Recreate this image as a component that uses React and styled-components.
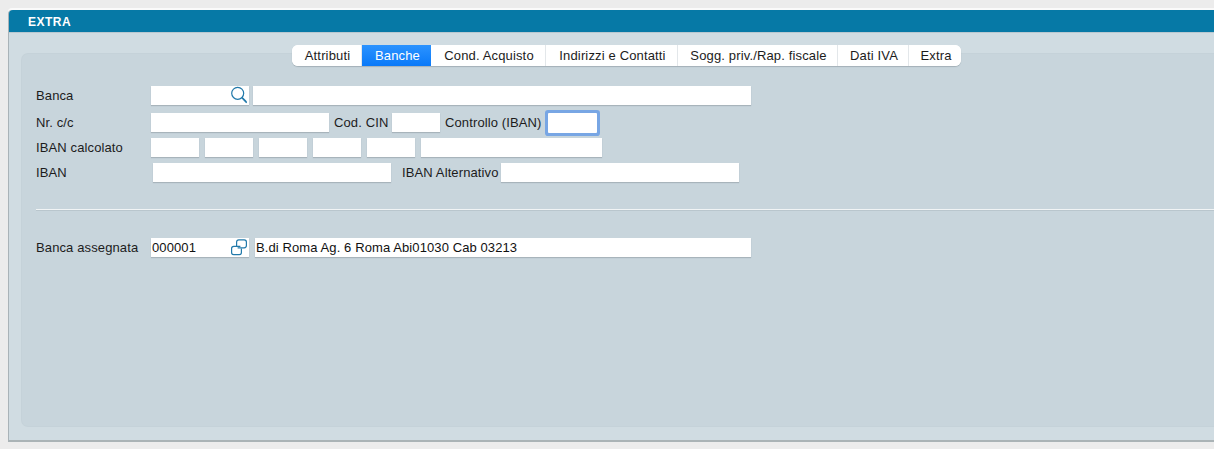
import React from 'react';
import styled, { createGlobalStyle } from 'styled-components';

const GlobalStyle = createGlobalStyle`
  html, body {
    margin: 0;
    padding: 0;
    height: 449px;
    overflow: hidden;
    background: #ececec;
    font-family: 'Liberation Sans', Arial, sans-serif;
    font-size: 13px;
    color: #1c1c1c;
  }
`;

const Page = styled.div`
  padding: 10px 0 0 8px;
  height: 449px;
  box-sizing: border-box;
  border-top: 1px solid #e2e2e2;
  margin-top: -1px;
`;

const Window = styled.div`
  width: 1230px;
  height: 432px;
  box-sizing: border-box;
  display: flex;
  flex-direction: column;
  background: #d0dce2;
  border-radius: 4px 0 0 0;
  border-left: 1px solid #a9b3b8;
  border-bottom: 2px solid #aab3b6;
  box-shadow: 0 -2px 0 #fafafa;
`;

const TitleBar = styled.div`
  height: 23px;
  flex: none;
  display: flex;
  align-items: center;
  padding: 1px 0 0 19px;
  box-sizing: border-box;
  background: #0679a6;
  border-radius: 4px 0 0 0;
  color: #fff;
  font-size: 12px;
  font-weight: 700;
  letter-spacing: 0.5px;
  border-bottom: 1px solid #b9c8d0;
`;

const Tabs = styled.div`
  display: flex;
  align-self: flex-start;
  height: 21px;
  margin: 12px 0 0 283px;
  position: relative;
  z-index: 1;
  background: #fff;
  border-radius: 6px;
  box-shadow: 0 1px 1px #a3b0b7;
  overflow: hidden;
`;

const Tab = styled.div`
  display: flex;
  align-items: center;
  justify-content: center;
  width: ${p => p.$w}px;
  padding-left: 2px;
  letter-spacing: 0.15px;
  color: ${p => (p.$active ? '#fff' : '#1c1c1c')};
  background: ${p => (p.$active ? 'linear-gradient(#2b93ff, #0a79f8)' : '#fff')};
  border-right: ${p => (p.$last || p.$active ? 'none' : '1px solid #e3e7ea')};
  box-sizing: border-box;
`;

const Inner = styled.div`
  flex: 1;
  margin: -12px 0 14px 13px;
  padding: 32px 0 0 14px;
  background: #c8d5dc;
  border-radius: 6px 0 0 6px;
  box-shadow: 0 0 0 1px #c5d2d9;
`;

const Row = styled.div`
  display: flex;
  align-items: center;
  height: 19px;
  margin-top: ${p => p.$top || 0}px;
`;

const RowLabel = styled.div`
  width: ${p => p.$w || 115}px;
  flex: none;
  margin-top: -1px;
  white-space: nowrap;
  letter-spacing: 0.12px;
`;

const InlineLabel = styled.div`
  margin-left: ${p => p.$ml}px;
  margin-top: -1px;
  white-space: nowrap;
  width: ${p => p.$w}px;
  flex: none;
  letter-spacing: 0.12px;
`;

const Field = styled.div`
  width: ${p => p.$w}px;
  height: 19px;
  flex: none;
  margin-left: ${p => p.$ml || 0}px;
  position: relative;
  display: flex;
  align-items: center;
  padding-left: 1px;
  box-sizing: border-box;
  background: #fff;
  box-shadow: 0 1px 1px #a8b4bb;
  font-size: 13px;
  color: #111;
  letter-spacing: 0.1px;
`;

const FocusField = styled(Field)`
  height: 20px;
  margin-top: 1px;
  box-shadow: 0 0 0 3px #78a6e4;
  border-radius: 1px;
`;

const FieldIcon = styled.svg`
  position: absolute;
  right: 2px;
  top: 0;
  width: 18px;
  height: 18px;
  fill: none;
  stroke: #2179aa;
  stroke-width: 1.2;
`;

const Rule = styled.div`
  height: 1px;
  margin: 27px 0 28px;
  background: #f1f4f5;
  box-shadow: 0 1px 0 #b9c6cd;
`;

const SearchIcon = () => (
  <FieldIcon viewBox="0 0 18 18">
    <circle cx="8.7" cy="7.3" r="6" />
    <path d="M13 11.6 L17.8 16.6" strokeWidth="1.7" />
  </FieldIcon>
);

const LinkIcon = () => (
  <FieldIcon viewBox="0 0 18 18">
    <path d="M7.6 8 V4 Q7.6 1.8 9.8 1.8 H15.2 Q17.4 1.8 17.4 4 V7.6 Q17.4 9.8 15.2 9.8 H8.6" />
    <path d="M12.4 10.6 V14.4 Q12.4 16.6 10.2 16.6 H4.8 Q2.6 16.6 2.6 14.4 V10.6 Q2.6 8.4 4.8 8.4 H11.4" />
  </FieldIcon>
);

const tabs = [
  ['Attributi', 70],
  ['Banche', 69],
  ['Cond. Acquisto', 115],
  ['Indirizzi e Contatti', 132],
  ['Sogg. priv./Rap. fiscale', 160],
  ['Dati IVA', 71],
  ['Extra', 52]
];

const App = () => (
  <Page>
    <GlobalStyle />
    <Window>
      <TitleBar>EXTRA</TitleBar>
      <Tabs>
        {tabs.map(([name, w], i) => (
          <Tab key={name} $w={w} $active={name === 'Banche'} $last={i === tabs.length - 1}>
            {name}
          </Tab>
        ))}
      </Tabs>
      <Inner>
        <Row>
          <RowLabel>Banca</RowLabel>
          <Field $w={98}><SearchIcon /></Field>
          <Field $w={498} $ml={4} />
        </Row>
        <Row $top={8}>
          <RowLabel>Nr. c/c</RowLabel>
          <Field $w={178} />
          <InlineLabel $ml={5} $w={58}>Cod. CIN</InlineLabel>
          <Field $w={48} />
          <InlineLabel $ml={5} $w={103}>Controllo (IBAN)</InlineLabel>
          <FocusField $w={49} />
        </Row>
        <Row $top={6}>
          <RowLabel>IBAN calcolato</RowLabel>
          <Field $w={48} />
          <Field $w={48} $ml={6} />
          <Field $w={48} $ml={6} />
          <Field $w={48} $ml={6} />
          <Field $w={48} $ml={6} />
          <Field $w={181} $ml={6} />
        </Row>
        <Row $top={6}>
          <RowLabel $w={117}>IBAN</RowLabel>
          <Field $w={238} />
          <InlineLabel $ml={11} $w={99}>IBAN Alternativo</InlineLabel>
          <Field $w={238} />
        </Row>
        <Rule />
        <Row>
          <RowLabel>Banca assegnata</RowLabel>
          <Field $w={98}>000001<LinkIcon /></Field>
          <Field $w={496} $ml={6}>B.di Roma Ag. 6 Roma Abi01030 Cab 03213</Field>
        </Row>
      </Inner>
    </Window>
  </Page>
);

export default App;
